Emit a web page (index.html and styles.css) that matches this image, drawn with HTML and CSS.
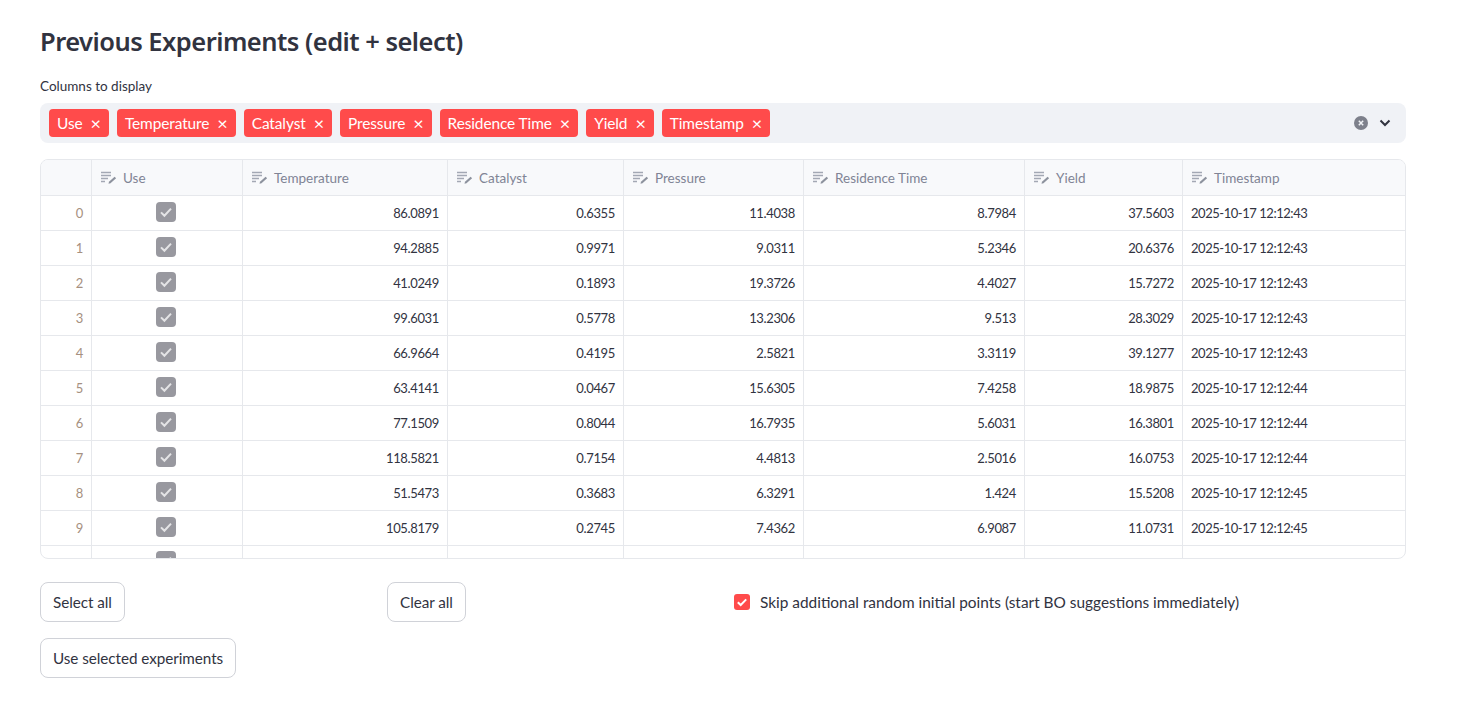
FILE: index.html
```html
<!DOCTYPE html>
<html lang="en">
<head>
    <meta charset="UTF-8">
    <meta name="viewport" content="width=device-width, initial-scale=1.0">
    <title>Previous Experiments</title>
    <link rel="stylesheet" href="styles.css">
</head>
<body>
    <svg class="icon-defs" width="0" height="0">
        <symbol id="edit" viewBox="0 0 16 14">
            <path d="M0 1.5h10M0 4.5h10M0 7.5h7M0 10.5h4" fill="none" stroke="#a3a8b4" stroke-width="1.4"/>
            <path d="M7.5 12.8l.5-2 5.6-5 1.5 1.5-5.6 5z" fill="#8d929e"/>
        </symbol>
        <symbol id="check" viewBox="0 0 20 20">
            <rect width="20" height="20" rx="4" fill="#98989f"/>
            <path d="M5 10.4l3.4 3.4L15 6.6" fill="none" stroke="#e4e4e6" stroke-width="2"/>
        </symbol>
    </svg>
    <div class="main">
        <h1>Previous Experiments (edit + select)</h1>
        <div class="field-label">Columns to display</div>
        <div class="multiselect">
            <div class="tags">
                <span class="tag">Use <span class="tag-x">×</span></span>
                <span class="tag">Temperature <span class="tag-x">×</span></span>
                <span class="tag">Catalyst <span class="tag-x">×</span></span>
                <span class="tag">Pressure <span class="tag-x">×</span></span>
                <span class="tag">Residence Time <span class="tag-x">×</span></span>
                <span class="tag">Yield <span class="tag-x">×</span></span>
                <span class="tag">Timestamp <span class="tag-x">×</span></span>
            </div>
            <svg class="clear-icon" width="14" height="14" viewBox="0 0 14 14">
                <circle cx="7" cy="7" r="7" fill="#7d808b"/>
                <path d="M4.8 4.8l4.4 4.4M9.2 4.8l-4.4 4.4" stroke="#f0f2f6" stroke-width="1.5"/>
            </svg>
            <svg class="chevron-icon" width="12" height="8" viewBox="0 0 12 8">
                <path d="M1.5 1.5L6 6l4.5-4.5" fill="none" stroke="#31333f" stroke-width="2"/>
            </svg>
        </div>
        <div class="table-wrap">
            <table class="data-table">
                <thead>
                    <tr>
                        <th></th>
                        <th><svg class="edit-icon"><use href="#edit"/></svg>Use</th>
                        <th><svg class="edit-icon"><use href="#edit"/></svg>Temperature</th>
                        <th><svg class="edit-icon"><use href="#edit"/></svg>Catalyst</th>
                        <th><svg class="edit-icon"><use href="#edit"/></svg>Pressure</th>
                        <th><svg class="edit-icon"><use href="#edit"/></svg>Residence Time</th>
                        <th><svg class="edit-icon"><use href="#edit"/></svg>Yield</th>
                        <th><svg class="edit-icon"><use href="#edit"/></svg>Timestamp</th>
                    </tr>
                </thead>
                <tbody>
                    <tr><td>0</td><td><svg class="row-check"><use href="#check"/></svg></td><td>86.0891</td><td>0.6355</td><td>11.4038</td><td>8.7984</td><td>37.5603</td><td>2025-10-17 12:12:43</td></tr>
                    <tr><td>1</td><td><svg class="row-check"><use href="#check"/></svg></td><td>94.2885</td><td>0.9971</td><td>9.0311</td><td>5.2346</td><td>20.6376</td><td>2025-10-17 12:12:43</td></tr>
                    <tr><td>2</td><td><svg class="row-check"><use href="#check"/></svg></td><td>41.0249</td><td>0.1893</td><td>19.3726</td><td>4.4027</td><td>15.7272</td><td>2025-10-17 12:12:43</td></tr>
                    <tr><td>3</td><td><svg class="row-check"><use href="#check"/></svg></td><td>99.6031</td><td>0.5778</td><td>13.2306</td><td>9.513</td><td>28.3029</td><td>2025-10-17 12:12:43</td></tr>
                    <tr><td>4</td><td><svg class="row-check"><use href="#check"/></svg></td><td>66.9664</td><td>0.4195</td><td>2.5821</td><td>3.3119</td><td>39.1277</td><td>2025-10-17 12:12:43</td></tr>
                    <tr><td>5</td><td><svg class="row-check"><use href="#check"/></svg></td><td>63.4141</td><td>0.0467</td><td>15.6305</td><td>7.4258</td><td>18.9875</td><td>2025-10-17 12:12:44</td></tr>
                    <tr><td>6</td><td><svg class="row-check"><use href="#check"/></svg></td><td>77.1509</td><td>0.8044</td><td>16.7935</td><td>5.6031</td><td>16.3801</td><td>2025-10-17 12:12:44</td></tr>
                    <tr><td>7</td><td><svg class="row-check"><use href="#check"/></svg></td><td>118.5821</td><td>0.7154</td><td>4.4813</td><td>2.5016</td><td>16.0753</td><td>2025-10-17 12:12:44</td></tr>
                    <tr><td>8</td><td><svg class="row-check"><use href="#check"/></svg></td><td>51.5473</td><td>0.3683</td><td>6.3291</td><td>1.424</td><td>15.5208</td><td>2025-10-17 12:12:45</td></tr>
                    <tr><td>9</td><td><svg class="row-check"><use href="#check"/></svg></td><td>105.8179</td><td>0.2745</td><td>7.4362</td><td>6.9087</td><td>11.0731</td><td>2025-10-17 12:12:45</td></tr>
                    <tr><td></td><td><svg class="row-check"><use href="#check"/></svg></td><td></td><td></td><td></td><td></td><td></td><td></td></tr>
                </tbody>
            </table>
        </div>
        <div class="controls">
            <div><button class="btn">Select all</button></div>
            <div><button class="btn">Clear all</button></div>
            <label class="skip-option">
                <svg class="skip-check" width="16" height="16" viewBox="0 0 16 16">
                    <rect width="16" height="16" rx="3" fill="#ff4b4b"/>
                    <path d="M3.8 8.2l2.9 2.8 5.5-5.6" fill="none" stroke="#fff" stroke-width="2"/>
                </svg>
                Skip additional random initial points (start BO suggestions immediately)
            </label>
        </div>
        <button class="btn">Use selected experiments</button>
    </div>
</body>
</html>
```

FILE: styles.css
```css
body {
    font-family: "Lato", "Noto Sans", sans-serif;
    color: #31333f;
    background-color: #fff;
    margin: 0;
    padding: 0;
}
.icon-defs {
    display: block;
    height: 0;
}
.main {
    padding: 23px 56px 26px 40px;
}
h1 {
    font-family: "Noto Sans", sans-serif;
    font-size: 25.5px;
    font-weight: 600;
    letter-spacing: -0.52px;
    line-height: 36px;
    margin: 0 0 20px;
}
.field-label {
    font-size: 13.5px;
    line-height: 14px;
    margin-bottom: 10px;
}
.multiselect {
    display: flex;
    align-items: center;
    height: 40px;
    padding: 0 15px 0 9px;
    background-color: #f0f2f6;
    border-radius: 8px;
}
.tags {
    display: flex;
    gap: 8px;
    flex: 1;
}
.tag {
    display: flex;
    justify-content: space-between;
    align-items: center;
    gap: 8px;
    height: 28px;
    padding: 0 8px;
    background-color: #ff4b4b;
    color: #fff;
    border-radius: 4px;
    font-size: 15.45px;
    letter-spacing: -0.1px;
}
.tag-x {
    font-size: 18px;
    line-height: 1;
}
.clear-icon {
    margin-right: 11px;
}
.table-wrap {
    height: 398px;
    margin-top: 16px;
    border: 1px solid #e6e8ec;
    border-radius: 8px;
    overflow: hidden;
}
.data-table {
    table-layout: fixed;
    width: 1364px;
    border-collapse: collapse;
    font-size: 13px;
}
.data-table th,
.data-table td {
    border-right: 1px solid #e6e8ec;
    border-bottom: 1px solid #e6e8ec;
    height: 34px;
    padding: 0 8px;
    box-sizing: content-box;
}
.data-table th {
    height: 35px;
    background-color: #f8f9fb;
    color: #808495;
    font-size: 13.5px;
    font-weight: 400;
    text-align: left;
    padding-left: 9px;
    padding-right: 7px;
}
.data-table td {
    text-align: right;
    letter-spacing: -0.35px;
}
.data-table th:first-child { width: 34px; }
.data-table th:nth-child(2) { width: 134px; }
.data-table th:nth-child(3) { width: 188px; }
.data-table th:nth-child(4) { width: 159px; }
.data-table th:nth-child(5) { width: 163px; }
.data-table th:nth-child(6) { width: 204px; }
.data-table th:nth-child(7) { width: 141px; }
.data-table th:last-child,
.data-table td:last-child {
    border-right: none;
}
.data-table td:first-child {
    color: #a69080;
}
.data-table td:nth-child(2) {
    text-align: center;
}
.data-table td:last-child {
    text-align: left;
    letter-spacing: -0.46px;
}
.data-table tbody tr:last-child td {
    vertical-align: top;
    padding-top: 6px;
}
.edit-icon {
    width: 16px;
    height: 14px;
    margin-right: 6px;
    vertical-align: -2px;
}
.row-check {
    display: block;
    width: 20px;
    height: 20px;
    margin: 0 auto;
    transform: translate(-1px, -1px);
}
.controls {
    display: grid;
    grid-template-columns: 331px 330px 1fr;
    gap: 16px;
    align-items: center;
    margin-top: 23px;
    margin-bottom: 16px;
}
.btn {
    height: 40px;
    padding: 0 12px;
    background-color: #fff;
    color: #31333f;
    border: 1px solid #d0d2d8;
    border-radius: 8px;
    font-family: inherit;
    font-size: 15.25px;
    letter-spacing: -0.05px;
}
.skip-option {
    display: flex;
    align-items: center;
    gap: 10px;
    padding-left: 1px;
    font-size: 15.4px;
}
```
